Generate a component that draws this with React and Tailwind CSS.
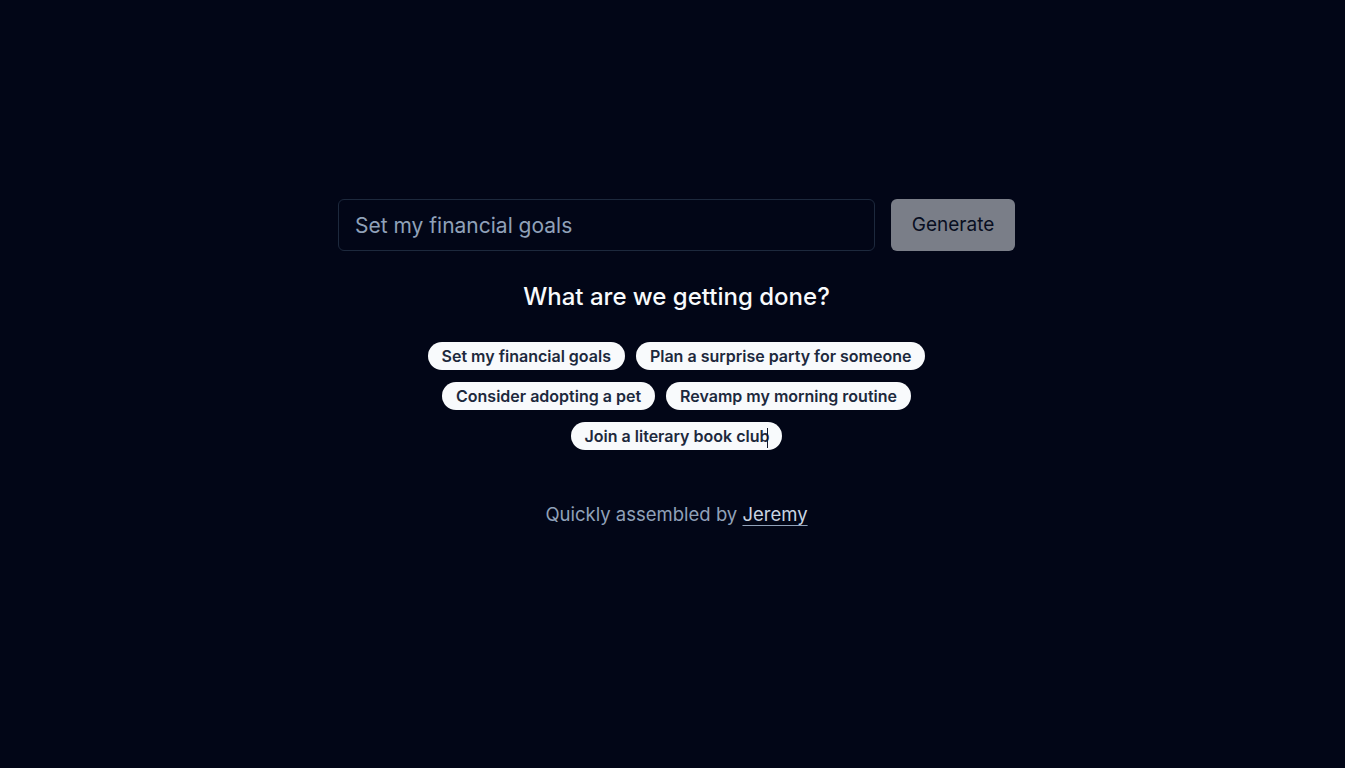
import React, { useState } from 'react';

const suggestions = [
  'Set my financial goals',
  'Plan a surprise party for someone',
  'Consider adopting a pet',
  'Revamp my morning routine',
  'Join a literary book club',
];

export default function App() {
  const [goal, setGoal] = useState('');

  return (
    <div
      className="min-h-screen bg-[#020617] flex flex-col items-center pt-[199px] pl-2"
      style={{ fontFamily: 'Inter, "Noto Sans", sans-serif' }}
    >
      {/* Input row */}
      <div className="flex w-[677px] gap-4">
        <input
          type="text"
          value={goal}
          onChange={(e) => setGoal(e.target.value)}
          placeholder="Set my financial goals"
          className="flex-1 h-[52px] px-4 bg-transparent border border-slate-800 rounded-md text-[21px] text-slate-200 placeholder-slate-400 focus:outline-none"
        />
        <button
          disabled={!goal.trim()}
          className="w-[124px] h-[52px] rounded-md bg-slate-100 text-slate-900 text-[19px] opacity-50"
        >
          Generate
        </button>
      </div>

      <h2 className="mt-[30px] text-2xl leading-8 font-medium text-slate-50">What are we getting done?</h2>

      {/* Suggestions */}
      <div className="mt-[29px] max-w-lg flex flex-wrap justify-center gap-x-[11px] gap-y-3">
        {suggestions.map((s, i) => (
          <button
            key={s}
            onClick={() => setGoal(s)}
            className="px-[14px] py-0.5 rounded-full bg-slate-50 text-slate-800 text-base leading-6 font-semibold whitespace-nowrap"
          >
            {s}
            {i === suggestions.length - 1 && (
              <span className="inline-block w-px h-5 bg-slate-900 align-middle -ml-0.5"></span>
            )}
          </button>
        ))}
      </div>

      <p className="mt-[50px] text-[18.5px] leading-7 text-slate-400">
        Quickly assembled by{' '}
        <a href="#" className="text-slate-300 underline underline-offset-4 decoration-slate-400">
          Jeremy
        </a>
      </p>
    </div>
  );
}
